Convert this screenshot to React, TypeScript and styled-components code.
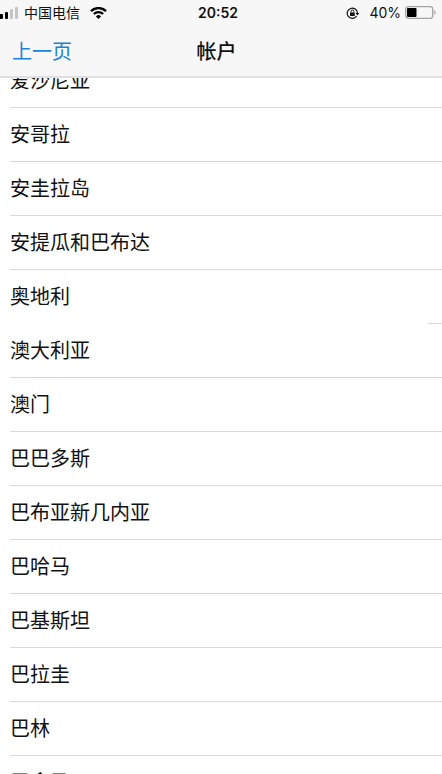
import React from 'react';
import styled, { createGlobalStyle } from 'styled-components';

const GlobalStyle = createGlobalStyle`
  *, *::before, *::after { box-sizing: border-box; }
  body {
    margin: 0;
    background: #fff;
    color: #111;
    font-family: Inter, "Noto Sans CJK SC", sans-serif;
  }
`;

const Screen = styled.div`
  display: flex;
  flex-direction: column;
  height: 100vh;
  overflow: hidden;
`;

const Header = styled.header`
  position: relative;
  z-index: 1;
  flex: none;
  background: #f7f7f7;
  border-bottom: 2px solid #e0e0e0;
`;

const StatusBar = styled.div`
  display: grid;
  grid-template-columns: 1fr auto 1fr;
  align-items: center;
  height: 25px;
  padding-right: 6px;
  font-size: 14px;
  line-height: 24px;
`;

const StatusGroup = styled.div<{ $end?: boolean }>`
  display: flex;
  align-items: center;
  justify-content: ${({ $end }) => ($end ? 'flex-end' : 'flex-start')};
`;

const Carrier = styled.span`
  margin: 0 10px 0 6px;
`;

const Clock = styled.time`
  font-weight: 600;
`;

const BatteryLevel = styled.span`
  margin: 0 4px 0 9px;
`;

const NavBar = styled.nav`
  display: grid;
  grid-template-columns: 1fr auto 1fr;
  align-items: center;
  height: 51px;
  padding: 2px 21px 0 12px;
`;

const BackButton = styled.button`
  justify-self: start;
  padding: 0;
  border: 0;
  background: none;
  color: #1b82d8;
  font: inherit;
  font-size: 20px;
  line-height: 30px;
  cursor: pointer;
`;

const Title = styled.h1`
  margin: 0;
  font-size: 20px;
  font-weight: 500;
  line-height: 30px;
`;

const CountryList = styled.ul`
  flex: 1;
  margin: -24px 0 0;
  padding: 0 0 0 10px;
  list-style: none;
`;

const CountryRow = styled.li<{ $selected?: boolean }>`
  height: 54px;
  border-bottom: 1px solid;
  border-color: ${({ $selected }) => ($selected ? 'transparent' : '#d9d9d9')};
  ${({ $selected }) =>
    $selected &&
    `border-image: linear-gradient(to left, #d9d9d9 15px, transparent 15px) 1;`}
`;

const CountryButton = styled.button`
  display: block;
  width: 100%;
  height: 100%;
  padding: 0 0 2px;
  border: 0;
  background: none;
  color: inherit;
  font: inherit;
  font-size: 20px;
  text-align: left;
  cursor: pointer;
`;

const SignalIcon = () => (
  <svg width="18" height="12" viewBox="0 0 18 12" aria-hidden="true">
    <rect x="-1" y="7" width="4" height="5" rx="1" fill="#050505" />
    <rect x="5" y="5" width="3" height="7" rx="1" fill="#050505" />
    <rect x="10" y="2" width="3" height="10" rx="1" fill="#c4c4c4" />
    <rect x="15" y="0" width="3" height="12" rx="1" fill="#c4c4c4" />
  </svg>
);

const WifiIcon = () => (
  <svg width="17" height="12" viewBox="0 0 17 12" fill="none" aria-hidden="true">
    <path d="M1 4.2a10.6 10.6 0 0 1 15 0" stroke="#050505" strokeWidth="2.4" />
    <path d="M3.8 7.1a6.7 6.7 0 0 1 9.4 0" stroke="#050505" strokeWidth="2.1" />
    <path d="M8.5 12 5.9 9.4a3.7 3.7 0 0 1 5.2 0z" fill="#050505" />
  </svg>
);

const RotationLockIcon = () => (
  <svg width="14" height="12" viewBox="0 0 14 12" fill="none" aria-hidden="true">
    <path d="M10.6 9A5.1 5.1 0 1 1 11.4 6.2" stroke="#111" strokeWidth="1.2" />
    <path d="M9.6 5.9h3.7l-1.9 2.5z" fill="#111" />
    <rect x="4" y="5.4" width="4.8" height="3.5" rx="0.5" fill="#111" />
    <path d="M5 5.6V4.4a1.4 1.4 0 0 1 2.8 0v1.2" stroke="#111" strokeWidth="1" />
  </svg>
);

const BatteryIcon = () => (
  <svg width="31" height="13" viewBox="0 0 31 13" fill="none" aria-hidden="true">
    <rect x="0.7" y="0.7" width="27" height="11.6" rx="2.6" stroke="#a3a3a3" strokeWidth="1.3" />
    <rect x="2" y="2" width="9.5" height="9" rx="1" fill="#000" />
    <path d="M29.2 4.3c1.8.5 1.8 3.9 0 4.4z" fill="#a3a3a3" />
  </svg>
);

const countries = [
  '爱沙尼亚',
  '安哥拉',
  '安圭拉岛',
  '安提瓜和巴布达',
  '奥地利',
  '澳大利亚',
  '澳门',
  '巴巴多斯',
  '巴布亚新几内亚',
  '巴哈马',
  '巴基斯坦',
  '巴拉圭',
  '巴林',
  '巴拿马',
];

const selectedCountry = '奥地利';

export default function App() {
  return (
    <Screen lang="zh-CN">
      <GlobalStyle />
      <Header>
        <StatusBar>
          <StatusGroup>
            <SignalIcon />
            <Carrier>中国电信</Carrier>
            <WifiIcon />
          </StatusGroup>
          <Clock>20:52</Clock>
          <StatusGroup $end>
            <RotationLockIcon />
            <BatteryLevel>40%</BatteryLevel>
            <BatteryIcon />
          </StatusGroup>
        </StatusBar>
        <NavBar>
          <BackButton type="button">上一页</BackButton>
          <Title>帐户</Title>
        </NavBar>
      </Header>
      <CountryList>
        {countries.map((country) => (
          <CountryRow key={country} $selected={country === selectedCountry}>
            <CountryButton type="button">{country}</CountryButton>
          </CountryRow>
        ))}
      </CountryList>
    </Screen>
  );
}
